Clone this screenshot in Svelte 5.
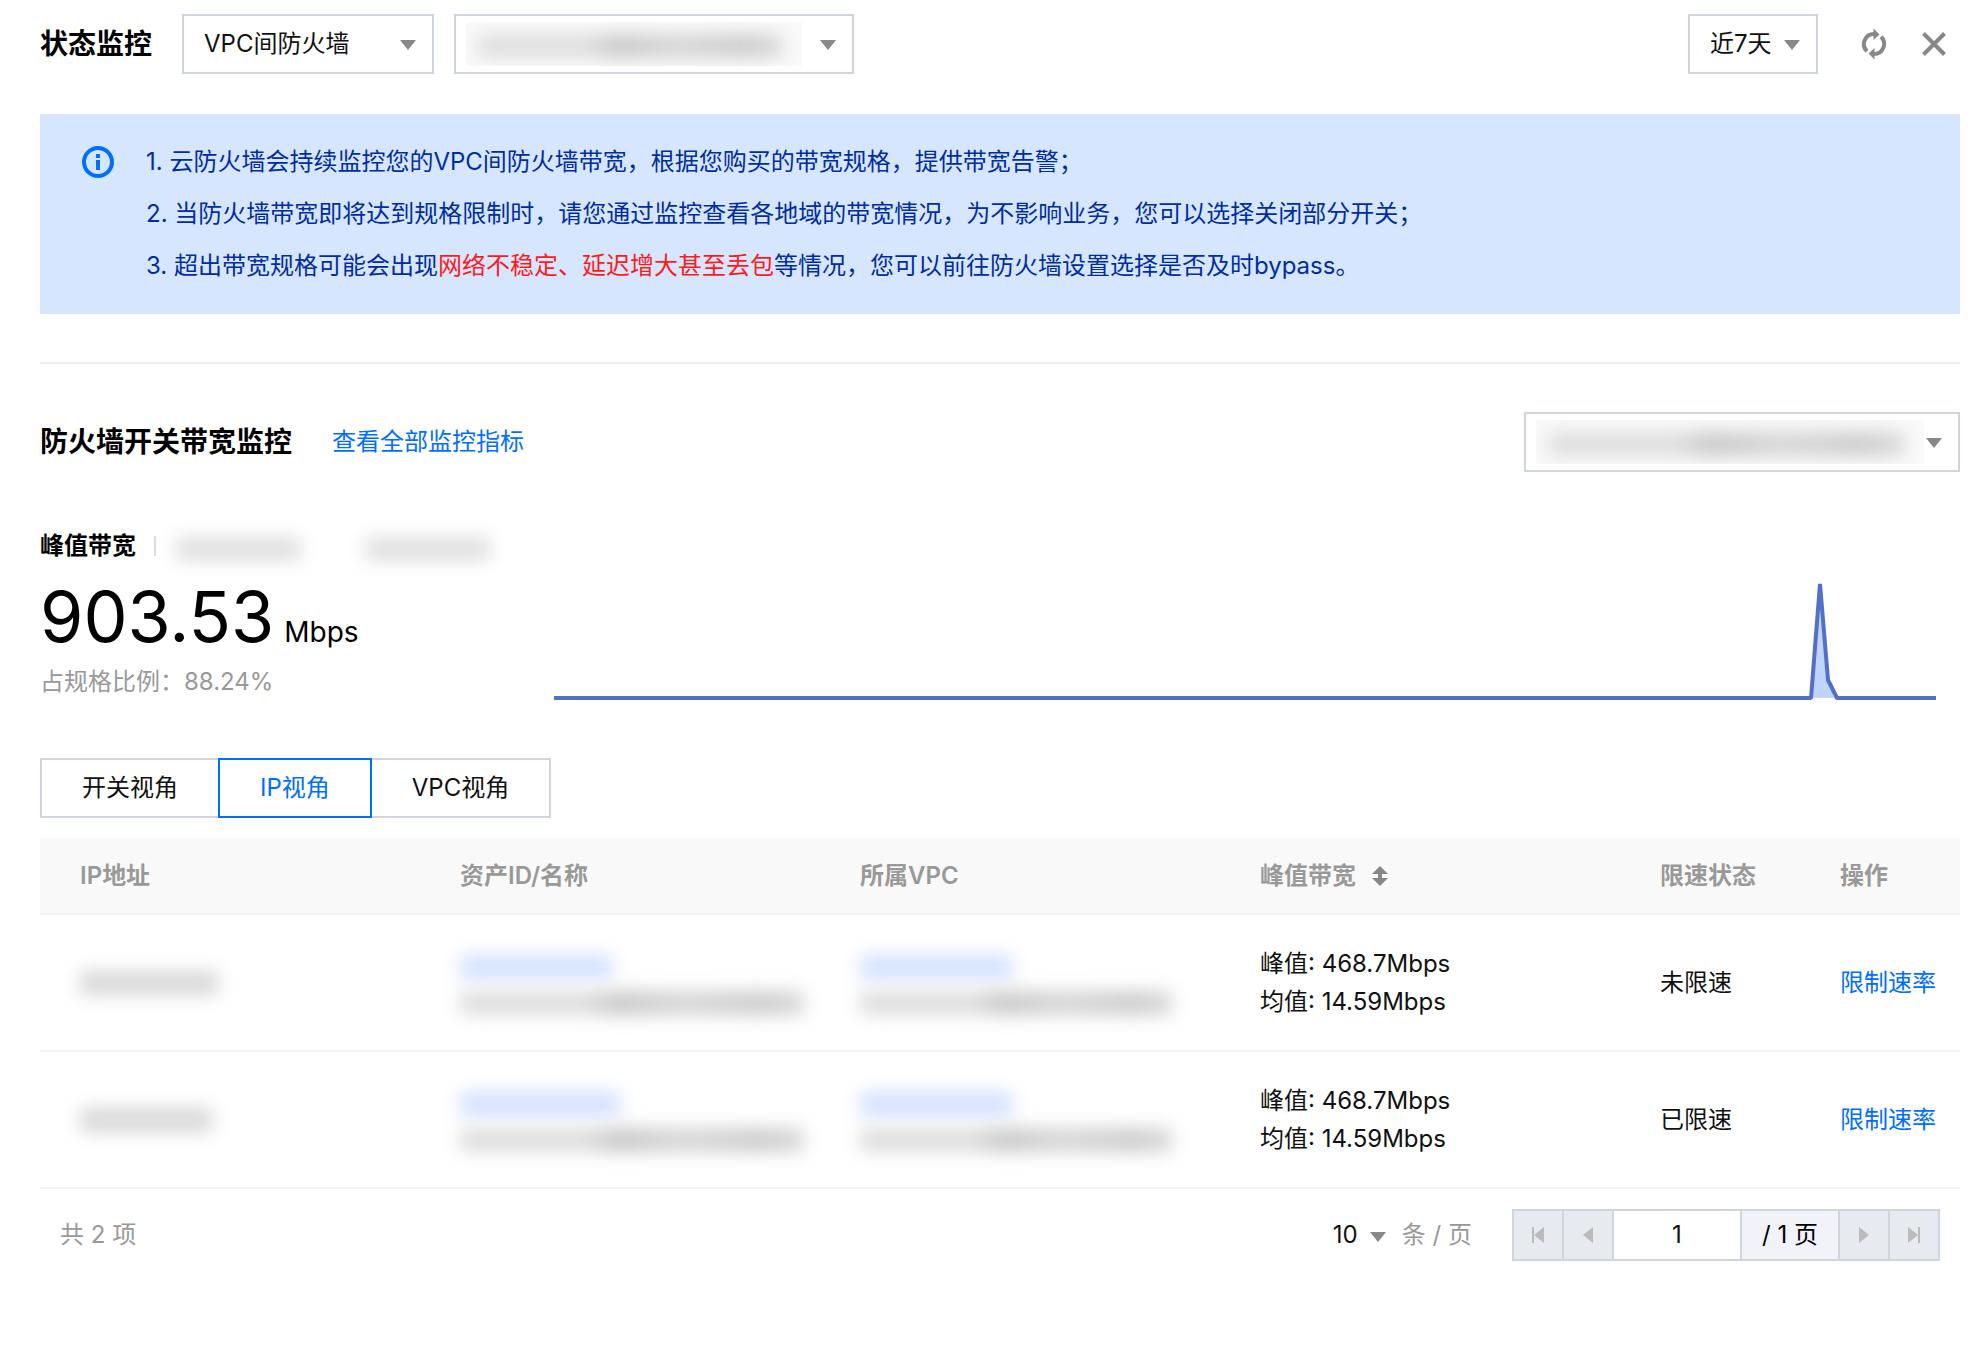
<script lang="ts">
  let firewallType = $state('vpc');
  let range = $state('7d');
  let pageSize = $state('10');
  let page = $state('1');
  let activeTab = $state('ip');

  const tabs = [
    { id: 'switch', label: '开关视角' },
    { id: 'ip', label: 'IP视角' },
    { id: 'vpc', label: 'VPC视角' },
  ];

  // width of the masked values, in px
  const rows = [
    { ip: 138, assetId: 152, asset: 344, vpcId: 152, vpc: 312, peak: '468.7Mbps', avg: '14.59Mbps', status: '未限速' },
    { ip: 132, assetId: 160, asset: 344, vpcId: 152, vpc: 312, peak: '468.7Mbps', avg: '14.59Mbps', status: '已限速' },
  ];
</script>

<main class="monitor">
  <header class="bar">
    <h1>状态监控</h1>
    <div class="select type">
      <select bind:value={firewallType} aria-label="防火墙类型">
        <option value="vpc">VPC间防火墙</option>
      </select>
      <i class="caret"></i>
    </div>
    <div class="select instance">
      <select aria-label="防火墙实例"><option></option></select>
      <span class="mask"><span class="smudge"></span></span>
      <i class="caret"></i>
    </div>
    <div class="tools">
      <div class="select range">
        <select bind:value={range} aria-label="时间范围">
          <option value="7d">近7天</option>
        </select>
        <i class="caret"></i>
      </div>
      <button class="icon" aria-label="刷新">
        <svg width="26" height="32" viewBox="0 0 26 32">
          <path d="M6 23.2A10 10 0 0 1 13 6" fill="none" stroke="#888" stroke-width="4" />
          <path d="M12.5 0.5L18.5 6.5L12.5 12Z" fill="#888" />
          <path d="M20 8.8A10 10 0 0 1 13 26" fill="none" stroke="#888" stroke-width="4" />
          <path d="M13.5 31.5L7.5 25.5L13.5 20Z" fill="#888" />
        </svg>
      </button>
      <button class="icon" aria-label="关闭">
        <svg width="24" height="24" viewBox="0 0 24 24">
          <path d="M1.5 1.5L22.5 22.5M22.5 1.5L1.5 22.5" stroke="#888" stroke-width="4" />
        </svg>
      </button>
    </div>
  </header>

  <section class="notice">
    <svg width="32" height="32" viewBox="0 0 32 32">
      <circle cx="16" cy="16" r="14" fill="none" stroke="#006eff" stroke-width="4" />
      <path d="M14 8h4v4h-4zM14 14h4v10h-4z" fill="#006eff" />
    </svg>
    <div>
      <p>1. 云防火墙会持续监控您的VPC间防火墙带宽，根据您购买的带宽规格，提供带宽告警；</p>
      <p>2. 当防火墙带宽即将达到规格限制时，请您通过监控查看各地域的带宽情况，为不影响业务，您可以选择关闭部分开关；</p>
      <p>3. 超出带宽规格可能会出现<em>网络不稳定、延迟增大甚至丢包</em>等情况，您可以前往防火墙设置选择是否及时bypass。</p>
    </div>
  </section>

  <hr />

  <div class="bar">
    <h2>防火墙开关带宽监控</h2>
    <a href="#metrics">查看全部监控指标</a>
    <div class="select switch">
      <select aria-label="防火墙开关"><option></option></select>
      <span class="mask"><span class="smudge"></span></span>
      <i class="caret"></i>
    </div>
  </div>

  <section class="metrics" id="metrics">
    <div class="peak">
      <div class="peak-title">
        <h3>峰值带宽</h3>
        <span class="split"></span>
        <span class="smudge faint"></span>
        <span class="smudge faint"></span>
      </div>
      <div class="value">
        <span>903.53</span>
        <small>Mbps</small>
      </div>
      <div class="ratio">占规格比例：88.24%</div>
    </div>
    <svg class="chart" viewBox="0 0 1382 118" preserveAspectRatio="none" role="img" aria-label="带宽趋势">
      <path d="M1257 116L1266 2L1274 98L1283 116Z" fill="#bfd4ff" />
      <path
        d="M0 116H1257L1266 2L1274 98L1283 116H1382"
        fill="none"
        stroke="#5470c6"
        stroke-width="4"
        stroke-linejoin="bevel"
        vector-effect="non-scaling-stroke"
      />
    </svg>
  </section>

  <div class="tabs">
    {#each tabs as tab}
      <button class:active={activeTab === tab.id} onclick={() => (activeTab = tab.id)}>{tab.label}</button>
    {/each}
  </div>

  <table>
    <colgroup>
      <col class="wide" /><col class="wide" /><col class="wide" /><col class="wide" />
      <col class="status" /><col class="action" />
    </colgroup>
    <thead>
      <tr>
        <th>IP地址</th>
        <th>资产ID/名称</th>
        <th>所属VPC</th>
        <th>
          <button class="sort">
            峰值带宽
            <svg width="16" height="20" viewBox="0 0 16 20">
              <path d="M8 0L16 8H10V12H16L8 20L0 12H6V8H0Z" fill="#888" />
            </svg>
          </button>
        </th>
        <th>限速状态</th>
        <th>操作</th>
      </tr>
    </thead>
    <tbody>
      {#each rows as row}
        <tr>
          <td><span class="smudge text" style="width: {row.ip}px"></span></td>
          <td>
            <span class="smudge link" style="width: {row.assetId}px"></span>
            <span class="smudge" style="width: {row.asset}px"></span>
          </td>
          <td>
            <span class="smudge link" style="width: {row.vpcId}px"></span>
            <span class="smudge" style="width: {row.vpc}px"></span>
          </td>
          <td>
            <div>峰值: {row.peak}</div>
            <div>均值: {row.avg}</div>
          </td>
          <td>{row.status}</td>
          <td><a href="#limit">限制速率</a></td>
        </tr>
      {/each}
    </tbody>
  </table>

  <footer>
    <span class="total">共 2 项</span>
    <div class="size">
      <select bind:value={pageSize} aria-label="每页条数">
        <option value="10">10</option>
      </select>
      <i class="caret"></i>
    </div>
    <span class="unit">条 / 页</span>
    <div class="pager">
      <button disabled aria-label="首页">
        <svg width="14" height="16" viewBox="0 0 14 16"><path d="M1 0H3V16H1ZM13 0V16L3 8Z" fill="#bbb" /></svg>
      </button>
      <button disabled aria-label="上一页">
        <svg width="10" height="16" viewBox="0 0 10 16"><path d="M10 0V16L0 8Z" fill="#bbb" /></svg>
      </button>
      <input type="text" bind:value={page} aria-label="页码" />
      <span>/ 1 页</span>
      <button disabled aria-label="下一页">
        <svg width="10" height="16" viewBox="0 0 10 16"><path d="M0 0V16L10 8Z" fill="#bbb" /></svg>
      </button>
      <button disabled aria-label="末页">
        <svg width="14" height="16" viewBox="0 0 14 16"><path d="M11 0H13V16H11ZM1 0V16L11 8Z" fill="#bbb" /></svg>
      </button>
    </div>
  </footer>
</main>

<style>
  :global(body) {
    margin: 0;
    background: #fff;
  }

  .monitor {
    padding: 14px 12px 40px 40px;
    font-family: Inter, 'Noto Sans CJK SC', sans-serif;
    font-size: 24px;
    line-height: 38px;
    color: #111;
  }

  h1,
  h2,
  h3,
  p {
    margin: 0;
  }

  h1,
  h2 {
    font-size: 28px;
    font-weight: 600;
    color: #000;
  }

  a {
    color: #006eff;
    text-decoration: none;
  }

  button,
  input,
  select {
    font: inherit;
    color: inherit;
    border-radius: 0;
    box-sizing: border-box;
  }

  button {
    padding: 0;
    border: none;
    background: none;
    cursor: pointer;
  }

  select {
    appearance: none;
    outline: none;
    background: #fff;
  }

  .bar {
    display: flex;
    align-items: center;
  }

  .select {
    position: relative;
    height: 60px;
  }

  .select select {
    width: 100%;
    height: 60px;
    padding: 0 20px;
    border: 2px solid #cfd5de;
  }

  .caret {
    position: absolute;
    top: 26px;
    right: 18px;
    border: 8px solid transparent;
    border-top: 10px solid #888;
    border-bottom: none;
    pointer-events: none;
  }

  .type {
    width: 252px;
    margin: 0 20px 0 30px;
  }

  .instance {
    width: 400px;
  }

  .range {
    width: 130px;
  }

  .switch {
    width: 436px;
    margin-left: auto;
  }

  .tools {
    display: flex;
    align-items: center;
    margin-left: auto;
    padding-right: 14px;
  }

  .icon {
    display: flex;
    margin-left: 43px;
  }

  .icon + .icon {
    margin-left: 35px;
  }

  /* masked values */
  .mask {
    position: absolute;
    inset: 8px 48px 8px 12px;
    display: flex;
    align-items: center;
    padding: 4px 20px 0 12px;
    background: #fafafa;
    overflow: hidden;
    pointer-events: none;
  }

  .instance .mask {
    right: 52px;
  }

  .switch .mask {
    right: 36px;
  }

  .smudge {
    display: block;
    height: 24px;
    background: linear-gradient(90deg, #dedede 0 36%, #c8c8c8 46%, #d6d6d6 65%, #cccccc 88%, #dadada);
    filter: blur(9px);
  }

  .mask .smudge {
    flex: 1;
  }

  .smudge.text {
    background: #d8d8d8;
  }

  .smudge.link {
    height: 24px;
    margin: 4px 0 12px;
    background: #d2e0ff;
  }

  .smudge.faint {
    width: 128px;
    margin: 6px 64px 0 0;
    background: #e0e0e0;
  }

  .notice {
    display: flex;
    margin-top: 40px;
    padding: 22px 42px;
    background: #d6e6fe;
    color: #002da0;
    line-height: 52px;
  }

  .notice svg {
    flex: none;
    margin: 10px 32px 0 0;
  }

  .notice em {
    font-style: normal;
    color: #ff1a1a;
  }

  hr {
    height: 2px;
    margin: 48px 0;
    border: none;
    background: #f0f0f0;
  }

  .bar a {
    margin-left: 40px;
  }

  .metrics {
    display: flex;
    align-items: flex-end;
    margin-top: 56px;
  }

  .peak {
    flex: none;
    width: 514px;
    color: #000;
  }

  .peak-title {
    display: flex;
    align-items: center;
    height: 36px;
  }

  h3 {
    font-size: 24px;
    font-weight: 600;
    white-space: nowrap;
  }

  .split {
    width: 2px;
    height: 20px;
    margin: 0 20px 0 18px;
    background: #ddd;
  }

  .value {
    display: flex;
    align-items: baseline;
    gap: 10px;
    height: 94px;
    margin-top: 6px;
    font-size: 70px;
    line-height: 94px;
  }

  .value small {
    font-size: 28px;
    line-height: 38px;
  }

  .ratio {
    line-height: 36px;
    color: #999;
  }

  .chart {
    flex: 1;
    min-width: 0;
    height: 118px;
    margin-right: 24px;
  }

  .tabs {
    display: flex;
    margin: 58px 0 20px;
  }

  .tabs button {
    height: 60px;
    padding: 0 40px;
    border: 2px solid #cfd5de;
  }

  .tabs button + button {
    margin-left: -2px;
  }

  .tabs .active {
    z-index: 1;
    border-color: #006eff;
    color: #006eff;
  }

  table {
    width: 100%;
    table-layout: fixed;
    border-collapse: separate;
    border-spacing: 0;
  }

  .wide {
    width: 400px;
  }

  .status {
    width: 180px;
  }

  th,
  td {
    padding: 0 20px;
    border-bottom: 2px solid #f2f3f8;
    text-align: left;
    white-space: nowrap;
  }

  th:first-child,
  td:first-child {
    padding-left: 40px;
  }

  th {
    height: 75px;
    background: #f9f9f9;
    font-weight: 600;
    color: #999;
  }

  td {
    height: 135px;
  }

  .sort {
    display: flex;
    align-items: center;
    gap: 16px;
  }

  footer {
    display: flex;
    align-items: center;
    padding: 20px 20px 0;
  }

  .total,
  .unit {
    color: #999;
  }

  .size {
    position: relative;
    margin-left: auto;
  }

  .size select {
    width: 69px;
    padding: 0;
    border: none;
  }

  .size .caret {
    top: 16px;
    right: 16px;
  }

  .unit {
    margin-right: 40px;
  }

  .pager {
    display: flex;
    height: 52px;
    box-sizing: border-box;
    border: 2px solid #cfd5de;
  }

  .pager > * {
    display: flex;
    align-items: center;
    justify-content: center;
    width: 50px;
    border: none;
    border-right: 2px solid #cfd5de;
  }

  .pager > :last-child {
    width: 48px;
    border-right: none;
  }

  .pager button {
    background: #e7eaef;
  }

  .pager input {
    width: 128px;
    padding: 0;
    text-align: center;
    background: #fff;
  }

  .pager span {
    width: 96px;
    background: #f2f3f8;
    color: #000;
  }
</style>
